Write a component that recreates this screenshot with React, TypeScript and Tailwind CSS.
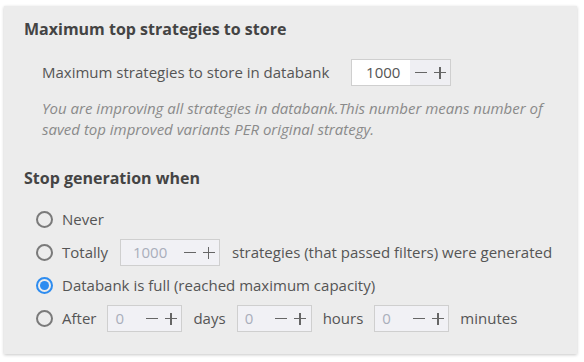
import { useState } from "react";

function Spinner({
    value,
    width,
    disabled = false,
    align = "right",
}: {
    value: string;
    width: number;
    disabled?: boolean;
    align?: "left" | "center" | "right";
}) {
    const alignClass = align === "left" ? "justify-start pl-[7px]" : align === "center" ? "justify-center" : "justify-end pr-[10px]";
    return (
        <div
            className={`flex h-[27px] shrink-0 border border-[#cfcfcf] ${disabled ? "bg-[#f1f1f5]" : "bg-white"}`}
            style={{ width }}
        >
            <div className={`flex flex-1 items-center ${alignClass} ${disabled ? "text-[#a9aebb]" : "text-[#555]"}`}>
                {value}
            </div>
            <div
                className={`flex w-[40px] items-center justify-center gap-[7px] ${
                    disabled ? "" : "bg-[#efeff3]"
                }`}
            >
                <span className="block h-[1.5px] w-[12px] bg-[#666]" />
                <span className="relative block h-[12px] w-[12px]">
                    <span className="absolute left-0 top-[5.25px] h-[1.5px] w-[12px] bg-[#666]" />
                    <span className="absolute left-[5.25px] top-0 h-[12px] w-[1.5px] bg-[#666]" />
                </span>
            </div>
        </div>
    );
}

function Radio({ checked, onClick }: { checked: boolean; onClick: () => void }) {
    return (
        <button
            onClick={onClick}
            className={`flex h-[17px] w-[17px] shrink-0 items-center justify-center rounded-full border-2 ${
                checked ? "border-[#2d8cf0]" : "border-[#7a7a7a]"
            }`}
        >
            {checked && <span className="h-[9px] w-[9px] rounded-full bg-[#2d8cf0]" />}
        </button>
    );
}

export default function App() {
    const [stop, setStop] = useState("full");

    return (
        <div className="h-[362px] w-[584px] bg-white pl-[4px] pt-[6px] font-['Open_Sans',sans-serif]">
            <div className="flex h-[348px] w-[573px] flex-col bg-[#ececec] pl-[20px] pt-[12px] shadow-[0_1px_3px_rgba(0,0,0,0.22)]">
                <h2 className="text-[16px] font-bold leading-[22px] text-[#444]">Maximum top strategies to store</h2>

                <div className="ml-[18px] mt-[19px] flex items-center gap-[22px] text-[15px] text-[#555]">
                    <span>Maximum strategies to store in databank</span>
                    <Spinner value="1000" width={100} />
                </div>

                <p className="ml-[18px] mt-[12px] w-[515px] text-[15px] italic leading-[21px] text-[#8a8a8a]">
                    You are improving all strategies in databank.This number means number of saved top improved variants PER
                    original strategy.
                </p>

                <h2 className="mt-[27px] text-[16px] font-bold leading-[22px] text-[#444]">Stop generation when</h2>

                <div className="ml-[12px] mt-[17px] flex flex-col gap-[6px] text-[15px] text-[#555]">
                    <div className="flex h-[27px] items-center gap-[9px]">
                        <Radio checked={stop === "never"} onClick={() => setStop("never")} />
                        <span>Never</span>
                    </div>
                    <div className="flex h-[27px] items-center gap-[9px]">
                        <Radio checked={stop === "totally"} onClick={() => setStop("totally")} />
                        <div className="flex items-center gap-[12px]">
                            <span>Totally</span>
                            <Spinner value="1000" width={100} disabled align="center" />
                            <span>strategies (that passed filters) were generated</span>
                        </div>
                    </div>
                    <div className="flex h-[27px] items-center gap-[9px]">
                        <Radio checked={stop === "full"} onClick={() => setStop("full")} />
                        <span>Databank is full (reached maximum capacity)</span>
                    </div>
                    <div className="flex h-[27px] items-center gap-[9px]">
                        <Radio checked={stop === "after"} onClick={() => setStop("after")} />
                        <div className="flex items-center gap-[11px]">
                            <span>After</span>
                            <Spinner value="0" width={75} disabled align="left" />
                            <span>days</span>
                            <Spinner value="0" width={75} disabled align="left" />
                            <span>hours</span>
                            <Spinner value="0" width={75} disabled align="left" />
                            <span>minutes</span>
                        </div>
                    </div>
                </div>
            </div>
        </div>
    );
}
